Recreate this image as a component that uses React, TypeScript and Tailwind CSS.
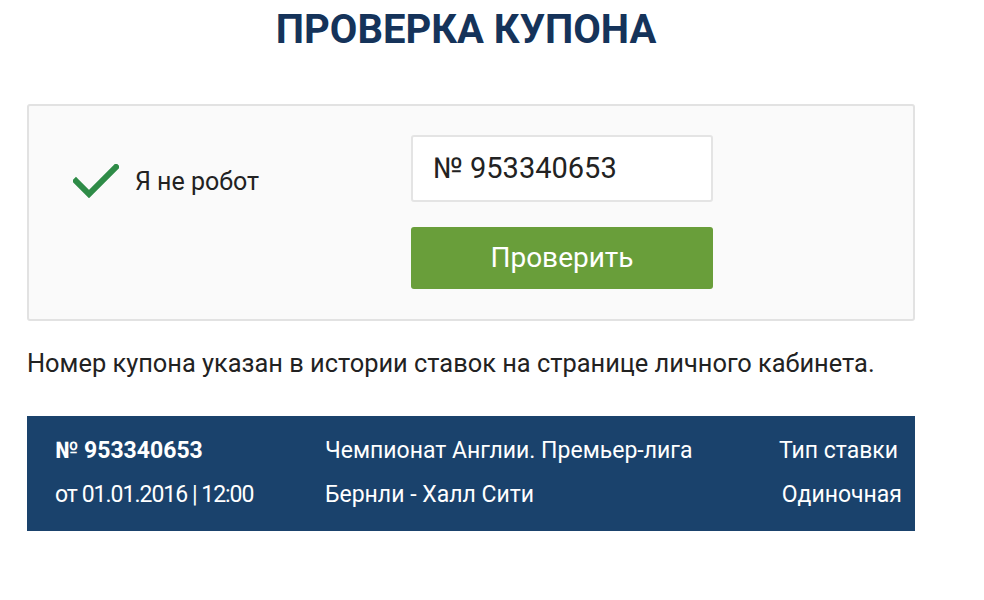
import React from 'react'

export default function App() {
  return (
    <div className="min-h-[600px] bg-white font-['Roboto','Noto_Sans',sans-serif] text-[#222]">
      <div className="ml-[27px] w-[888px] pt-[6px]">
        {/* Заголовок */}
        <h1 className="pr-[10px] text-center text-[40px] font-bold leading-[48px] text-[#15335a]">
          ПРОВЕРКА КУПОНА
        </h1>

        {/* Форма проверки */}
        <div className="mt-[50px] flex h-[217px] rounded-[3px] border-2 border-[#e2e2e2] bg-[#fafafa]">
          <div className="flex w-[382px] items-start pl-[44px] pt-[56px]">
            <svg width="46" height="34" viewBox="0 0 46 34" className="mt-[2px]">
              <path d="M3 17 L16 30 L43 3" fill="none" stroke="#2e8b47" strokeWidth="6" strokeLinecap="square" />
            </svg>
            <span className="ml-[16px] text-[25px] leading-[40px]">Я не робот</span>
          </div>
          <div className="flex w-[302px] flex-col pt-[29px]">
            <div className="flex h-[67px] items-center rounded-[3px] border-2 border-[#e4e4e4] bg-white pl-[20px] text-[29px]">
              № 953340653
            </div>
            <button className="mt-[25px] h-[62px] rounded-[3px] bg-[#699e3a] text-[28px] text-white">
              Проверить
            </button>
          </div>
        </div>

        <p className="mt-[25px] text-[25.4px] leading-[34px]">
          Номер купона указан в истории ставок на странице личного кабинета.
        </p>

        {/* Информация о купоне */}
        <div className="mt-[36px] flex h-[115px] bg-[#1a426c] pl-[28px] pr-[13px] pt-[13px] text-[23px] leading-[44px] text-white">
          <div className="w-[270px]">
            <div className="font-bold">№ 953340653</div>
            <div className="tracking-[-1px]">от 01.01.2016 | 12:00</div>
          </div>
          <div className="flex-1">
            <div>Чемпионат Англии. Премьер-лига</div>
            <div>Бернли - Халл Сити</div>
          </div>
          <div className="text-right">
            <div className="pr-[4px]">Тип ставки</div>
            <div>Одиночная</div>
          </div>
        </div>
      </div>
    </div>
  )
}
